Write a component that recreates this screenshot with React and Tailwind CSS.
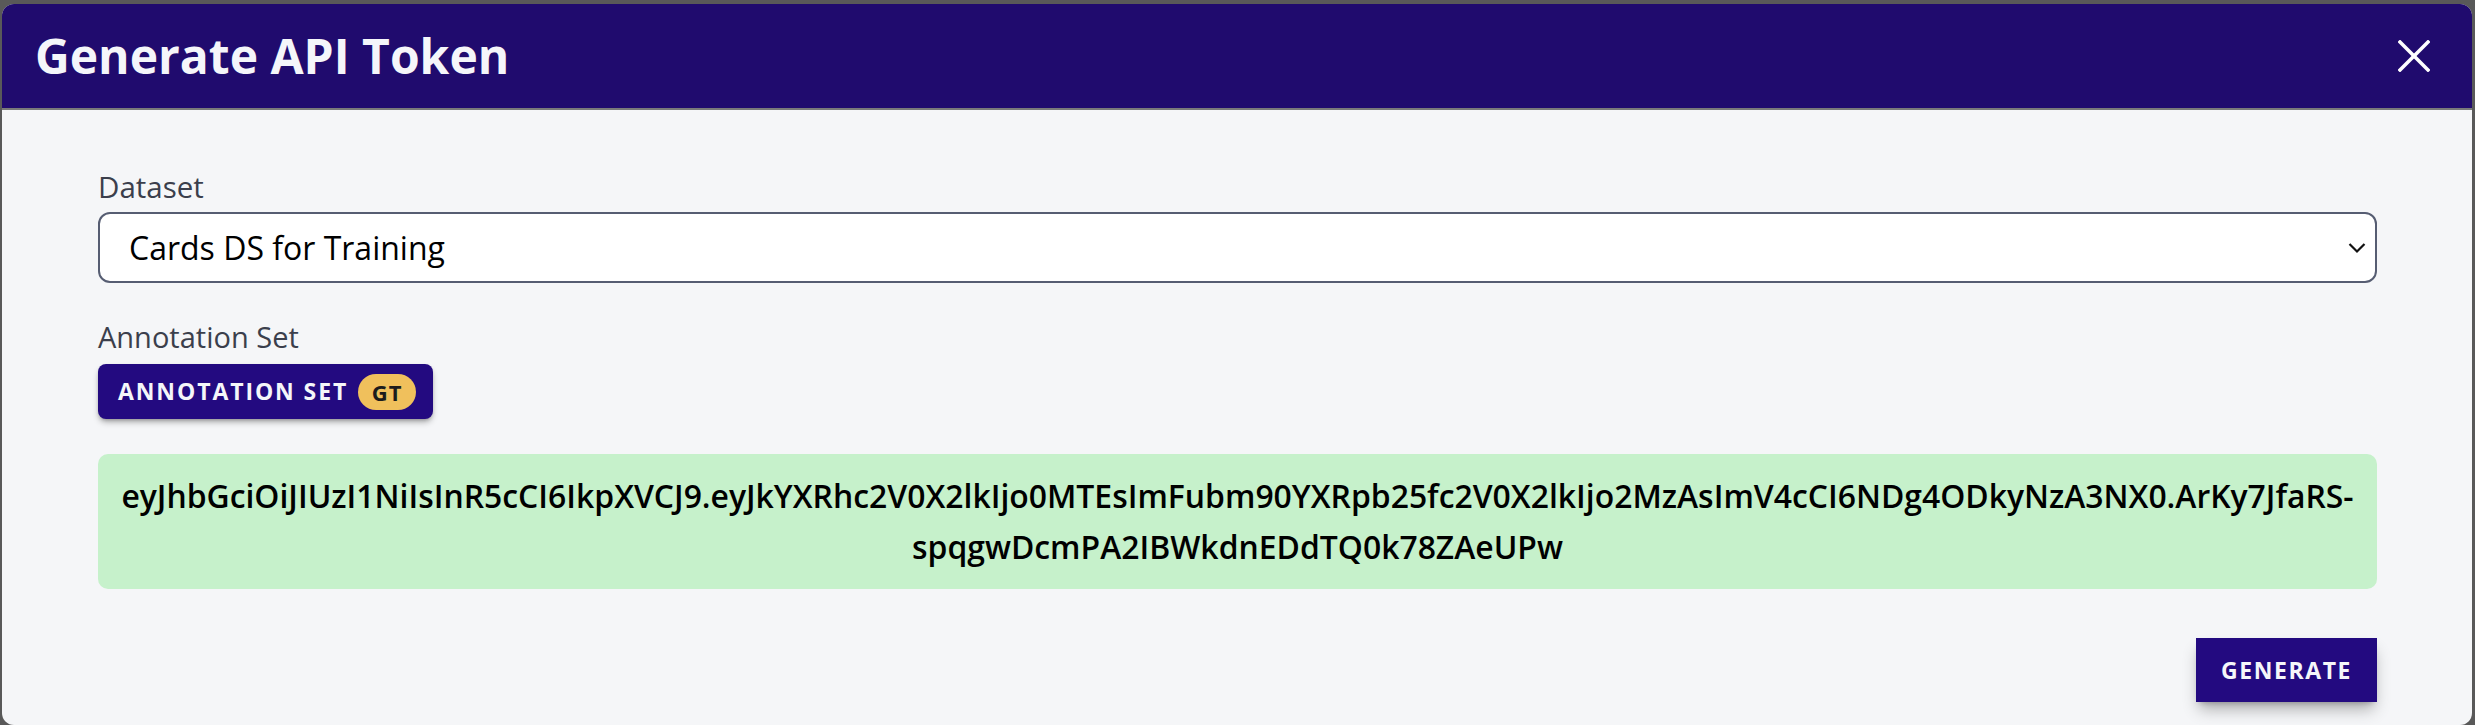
import React from 'react';

const TOKEN =
  'eyJhbGciOiJIUzI1NiIsInR5cCI6IkpXVCJ9.eyJkYXRhc2V0X2lkIjo0MTEsImFubm90YXRpb25fc2V0X2lkIjo2MzAsImV4cCI6NDg4ODkyNzA3NX0.ArKy7JfaRS-spqgwDcmPA2IBWkdnEDdTQ0k78ZAeUPw';

export default function App() {
  return (
    <div className="w-[2475px] h-[725px] bg-[#595959] pt-[4px] pl-[2px] pr-[3px] overflow-hidden font-['Open_Sans','Noto_Sans',sans-serif]">
      {/* dialog */}
      <div className="h-[721px] rounded-[12px] bg-[#f5f6f8] overflow-hidden flex flex-col">
        {/* header */}
        <div className="h-[106px] shrink-0 bg-[#200b6e] border-b-2 border-[#7a7a7a] flex items-center justify-between pl-[33px] pr-[42px]">
          <h1 className="text-[48px] leading-none font-bold text-[#f5f6fa]">Generate API Token</h1>
          <button className="text-white">
            <svg width="32" height="32" viewBox="0 0 32 32" fill="none" stroke="currentColor" strokeWidth="3.5" strokeLinecap="square">
              <line x1="2" y1="2" x2="30" y2="30" />
              <line x1="30" y1="2" x2="2" y2="30" />
            </svg>
          </button>
        </div>

        {/* body */}
        <div className="flex-1 pt-[59px] pl-[96px] pr-[95px] flex flex-col">
          <label className="text-[29.5px] leading-[36px] font-medium text-[#3b3f4c]">Dataset</label>
          <div className="mt-[7px] h-[71px] bg-white border-2 border-[#565d72] rounded-[12px] flex items-center justify-between pl-[29px] pr-[9px]">
            <span className="text-[32px] text-black">Cards DS for Training</span>
            <svg width="18" height="12" viewBox="0 0 18 12" fill="none" stroke="#111" strokeWidth="2.2">
              <path d="M1.5 2 L9 9.5 L16.5 2" />
            </svg>
          </div>

          <label className="mt-[36px] text-[29px] leading-[36px] font-medium text-[#3b3f4c]">Annotation Set</label>
          <div className="mt-[9px]">
            <button className="h-[55px] w-[335px] bg-[#230a80] rounded-[8px] shadow-md shadow-black/30 flex items-center pl-[20px] gap-[10px]">
              <span className="text-[23px] font-bold tracking-[1.9px] text-[#f5f6fa] leading-none">ANNOTATION SET</span>
              <span className="h-[36px] w-[58px] rounded-full bg-[#f0c05c] flex items-center justify-center text-[22px] font-bold tracking-[1px] text-[#1c1c1c] leading-none">GT</span>
            </button>
          </div>

          <div className="mt-[35px] h-[135px] bg-[#c6f1cb] rounded-[10px] px-[8px] pt-[16px] text-center text-[31.9px] leading-[51px] font-semibold text-black break-words">
            {TOKEN}
          </div>

          <div className="mt-[49px] flex justify-end">
            <button className="h-[64px] w-[181px] bg-[#230a80] shadow-lg shadow-black/30 text-[23px] font-bold tracking-[1.6px] text-[#f5f6fa]">
              GENERATE
            </button>
          </div>
        </div>
      </div>
    </div>
  );
}
